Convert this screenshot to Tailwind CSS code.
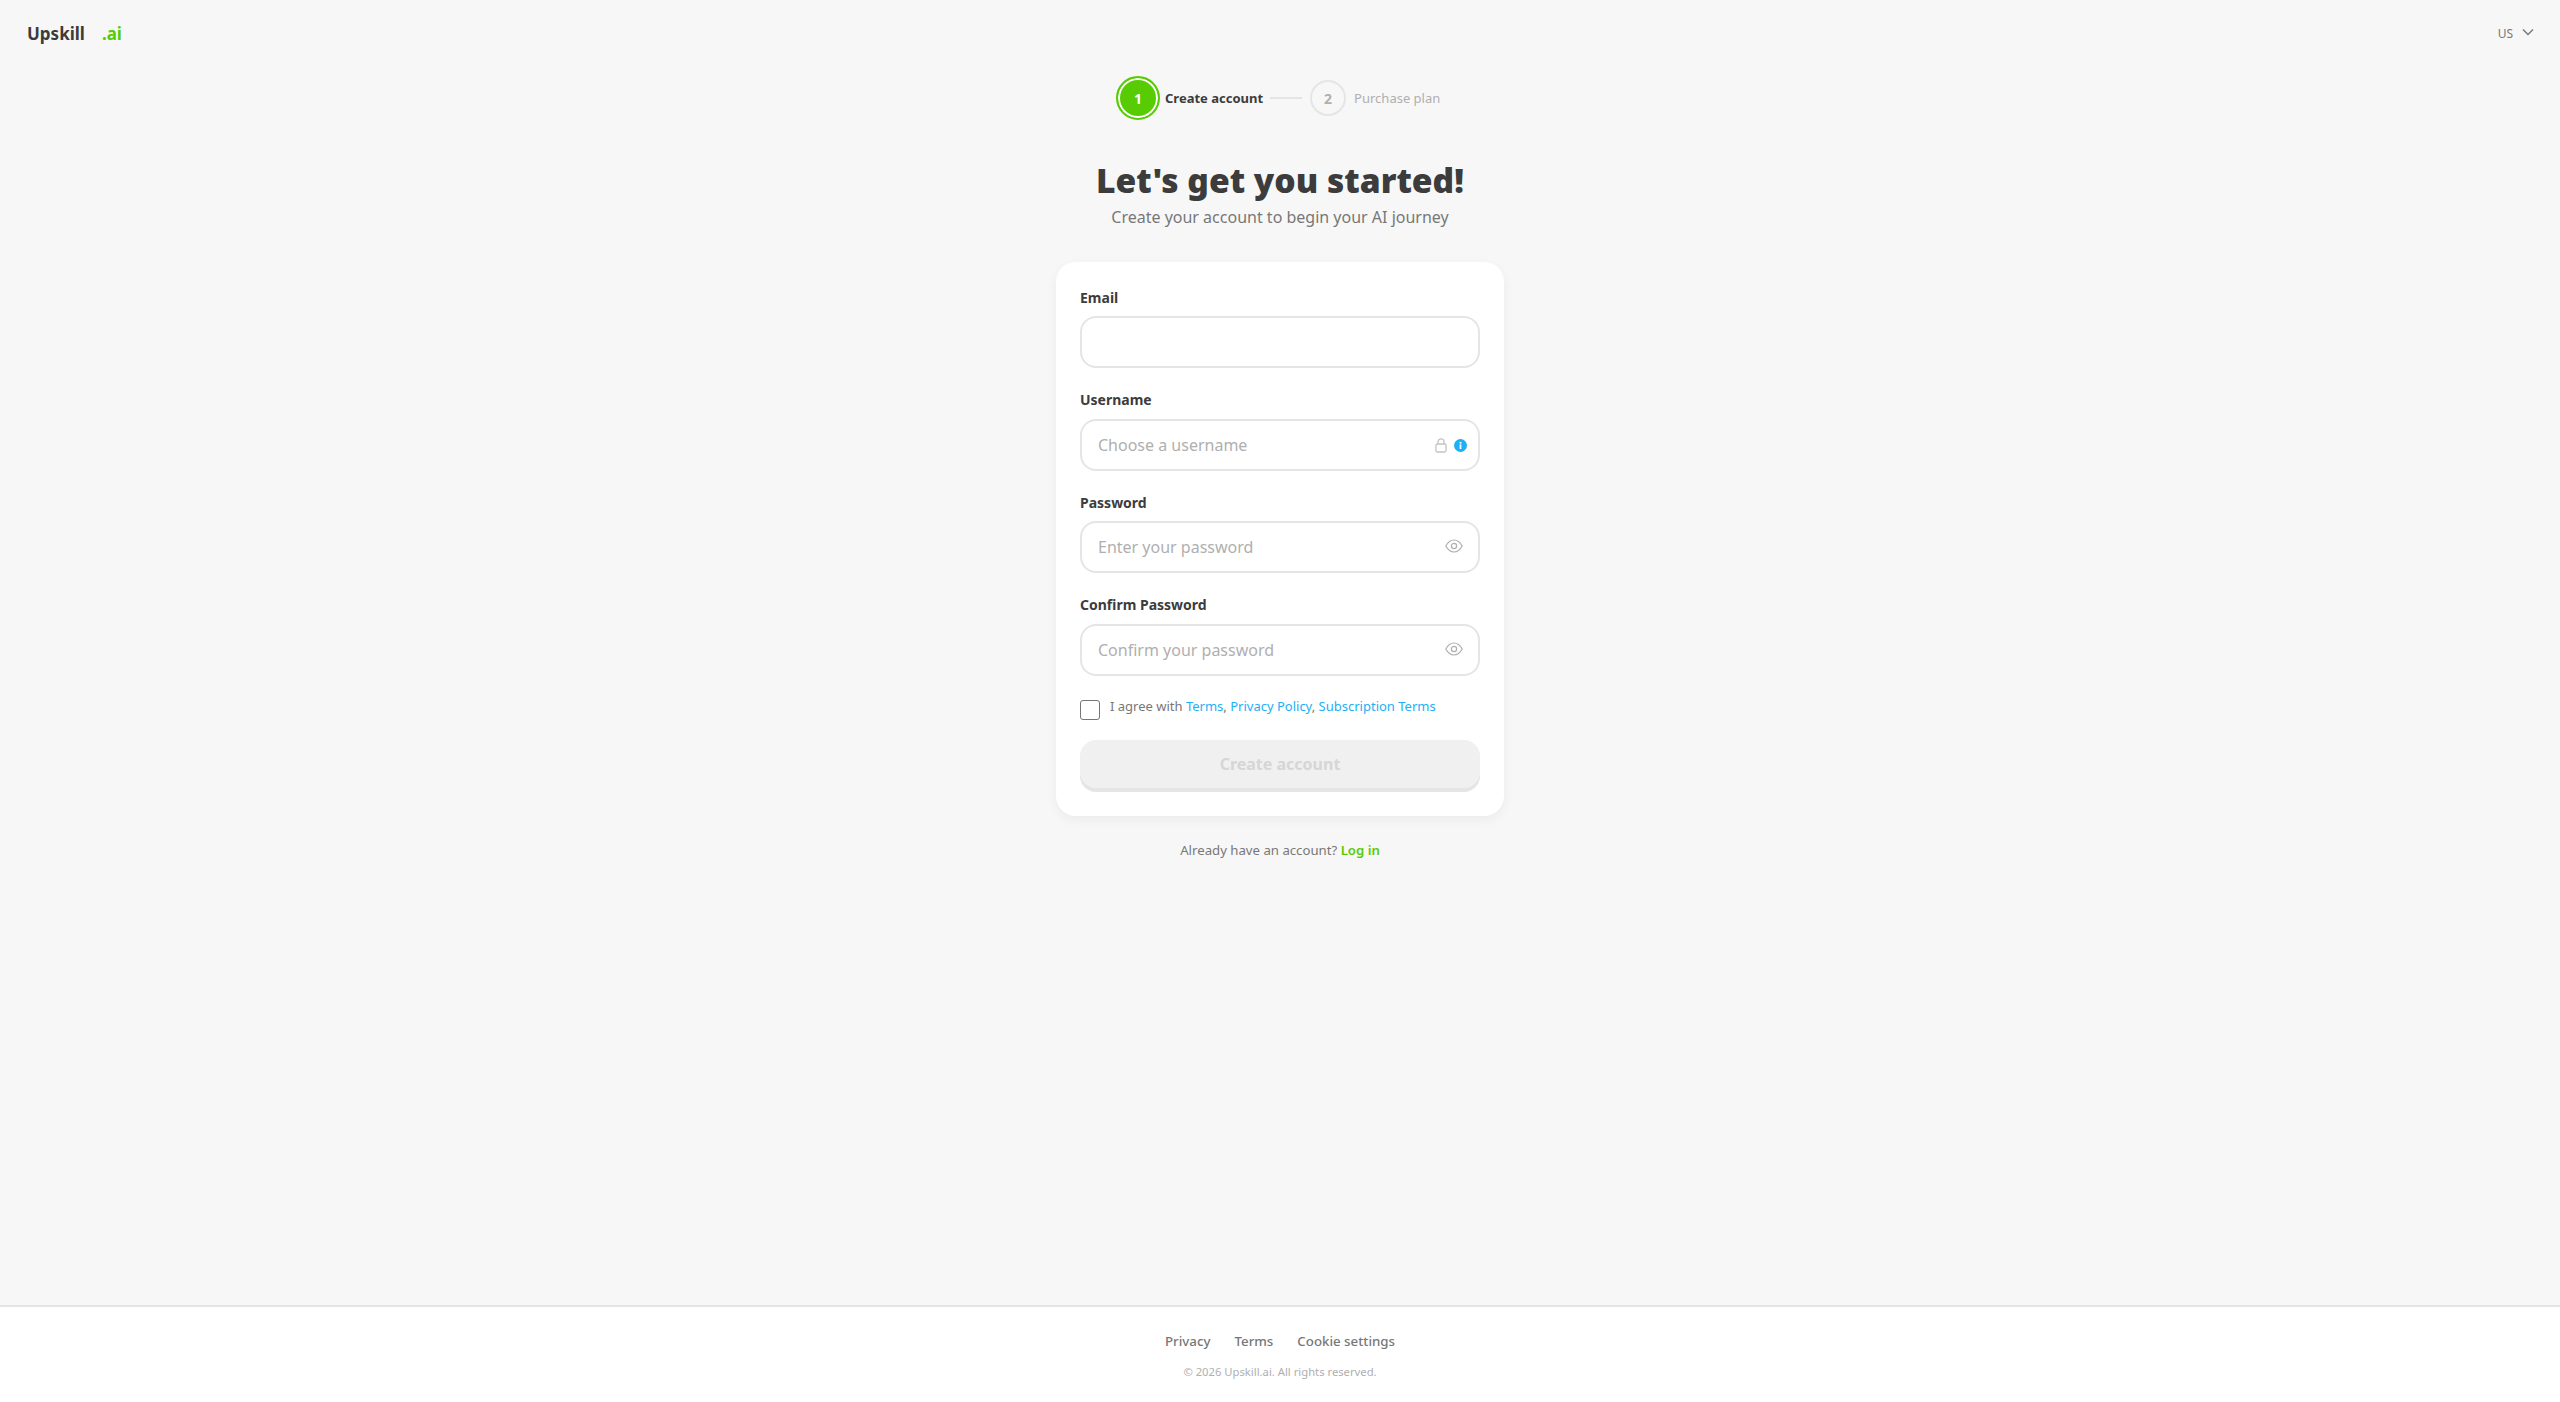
<!DOCTYPE html>
<html lang="en">
<head>
  <meta charset="UTF-8" />
  <meta name="viewport" content="width=device-width, initial-scale=1" />
  <title>Upskill.ai - Create account</title>
  <script src="https://cdn.jsdelivr.net/npm/@tailwindcss/browser@4"></script>
</head>
<body class="bg-[#f7f7f7] text-[#3c3c3c] font-['Noto_Sans',sans-serif] antialiased">
  <div class="h-[1402px] flex flex-col overflow-hidden">

    <!-- Header -->
    <header class="h-[66px] shrink-0 pl-[27px] pr-[26px] flex items-center justify-between">
      <a href="#" class="flex items-center gap-[17px] text-[17px] font-bold leading-none">
        <span>Upskill</span>
        <span class="text-[#58cc02]">.ai</span>
      </a>
      <button class="flex items-center gap-[9px] text-[12px] text-[#777777]">
        <span class="pt-[1px]">US</span>
        <svg class="w-[12px] h-[8px] -mt-[3px]" viewBox="0 0 12 8" fill="none" stroke="#777777" stroke-width="1.4"><path d="M1 1.5 L6 6.5 L11 1.5" /></svg>
      </button>
    </header>

    <main class="flex-1 flex flex-col items-center">
      <!-- Stepper -->
      <div class="h-[64px] flex items-center text-[13px] w-[448px] pl-[60px]">
        <div class="w-[44px] h-[44px] rounded-full bg-[#58cc02] border-2 border-[#58cc02] flex items-center justify-center shadow-[inset_0_0_0_2px_#ffffff] text-white font-bold text-[14px]">1</div>
        <span class="ml-[5px] pt-[2px] font-bold">Create account</span>
        <div class="w-[32px] h-[2px] bg-[#e5e5e5] ml-[7px]"></div>
        <div class="w-[36px] h-[36px] ml-[8px] rounded-full border-2 border-[#e5e5e5] flex items-center justify-center text-[#afafaf] font-bold text-[14px]">2</div>
        <span class="ml-[8px] pt-[2px] text-[#afafaf]">Purchase plan</span>
      </div>

      <h1 class="mt-[28px] text-[33.6px] leading-[44px] font-black text-center">Let's get you started!</h1>
      <p class="mt-[3px] text-[16px] leading-[24px] text-[#777777] text-center">Create your account to begin your AI journey</p>

      <!-- Card -->
      <form class="mt-[33px] w-[448px] bg-white rounded-[20px] shadow-[0_4px_12px_rgba(0,0,0,0.05)] px-[24px] pt-[26px] pb-[28px]">
        <label class="block h-[20px] mb-[8px] text-[14px] leading-[20px] font-bold">Email</label>
        <input type="email" class="block w-full h-[52px] border-2 border-[#e5e5e5] rounded-[16px] px-[16px] text-[16px] bg-white outline-none" />

        <label class="block h-[20px] mt-[22px] mb-[9px] text-[14px] leading-[20px] font-bold">Username</label>
        <div class="relative">
          <input type="text" placeholder="Choose a username" class="block w-full h-[52px] border-2 border-[#e5e5e5] rounded-[16px] px-[16px] text-[16px] bg-white outline-none placeholder:text-[#afafaf]" />
          <div class="absolute right-[13px] top-0 h-full flex items-center gap-[7px]">
            <svg class="w-[12px] h-[15px]" viewBox="0 0 12 15" fill="none" stroke="#c4c4c4" stroke-width="1.3"><rect x="0.9" y="6" width="10.2" height="8" rx="1.5" /><path d="M3 6V3.8a3 3 0 0 1 6 0V6" /></svg>
            <svg class="w-[13px] h-[13px]" viewBox="0 0 13 13"><circle cx="6.5" cy="6.5" r="6.5" fill="#1cb0f6" /><rect x="5.6" y="5.4" width="1.8" height="4.6" fill="#ffffff" /><rect x="5.6" y="2.9" width="1.8" height="1.7" fill="#ffffff" /></svg>
          </div>
        </div>

        <label class="block h-[20px] mt-[22px] mb-[8px] text-[14px] leading-[20px] font-bold">Password</label>
        <div class="relative">
          <input type="password" placeholder="Enter your password" class="block w-full h-[52px] border-2 border-[#e5e5e5] rounded-[16px] px-[16px] text-[16px] bg-white outline-none placeholder:text-[#afafaf]" />
          <svg class="absolute right-[17px] top-[18px] w-[18px] h-[14px]" viewBox="0 0 18 14" fill="none" stroke="#afafaf" stroke-width="1.2"><path d="M0.8 7C3 3 5.8 1 9 1s6 2 8.2 6c-2.2 4-5 6-8.2 6S3 11 0.8 7Z" /><circle cx="9" cy="7" r="2.6" /></svg>
        </div>

        <label class="block h-[20px] mt-[22px] mb-[9px] text-[14px] leading-[20px] font-bold">Confirm Password</label>
        <div class="relative">
          <input type="password" placeholder="Confirm your password" class="block w-full h-[52px] border-2 border-[#e5e5e5] rounded-[16px] px-[16px] text-[16px] bg-white outline-none placeholder:text-[#afafaf]" />
          <svg class="absolute right-[17px] top-[18px] w-[18px] h-[14px]" viewBox="0 0 18 14" fill="none" stroke="#afafaf" stroke-width="1.2"><path d="M0.8 7C3 3 5.8 1 9 1s6 2 8.2 6c-2.2 4-5 6-8.2 6S3 11 0.8 7Z" /><circle cx="9" cy="7" r="2.6" /></svg>
        </div>

        <div class="mt-[24px] flex items-start gap-[10px]">
          <span class="block shrink-0 w-[20px] h-[20px] border border-[#767676] rounded-[3px] bg-white"></span>
          <p class="-mt-[4px] text-[13px] leading-[20px] text-[#777777]">I agree with <a href="#" class="text-[#1cb0f6]">Terms</a>, <a href="#" class="text-[#1cb0f6]">Privacy Policy</a>, <a href="#" class="text-[#1cb0f6]">Subscription Terms</a></p>
        </div>

        <button type="button" disabled class="mt-[20px] w-full h-[48px] rounded-[16px] bg-[#f0f0f0] shadow-[0_4px_0_#e5e5e5] text-[16px] font-bold text-[#d6d6d6]">Create account</button>
      </form>

      <p class="mt-[24px] text-[13.2px] leading-[20px] text-[#777777] text-center">Already have an account? <a href="#" class="font-semibold text-[#58cc02]">Log in</a></p>
    </main>

    <!-- Footer -->
    <footer class="h-[97px] shrink-0 bg-white border-t-2 border-[#e5e5e5] flex flex-col items-center pt-[24px]">
      <nav class="flex gap-[24px] text-[13.3px] leading-[20px] font-medium text-[#777777]">
        <a href="#">Privacy</a>
        <a href="#">Terms</a>
        <a href="#">Cookie settings</a>
      </nav>
      <p class="mt-[13px] text-[11.25px] leading-[16px] text-[#afafaf]">© 2026 Upskill.ai. All rights reserved.</p>
    </footer>
  </div>
</body>
</html>
